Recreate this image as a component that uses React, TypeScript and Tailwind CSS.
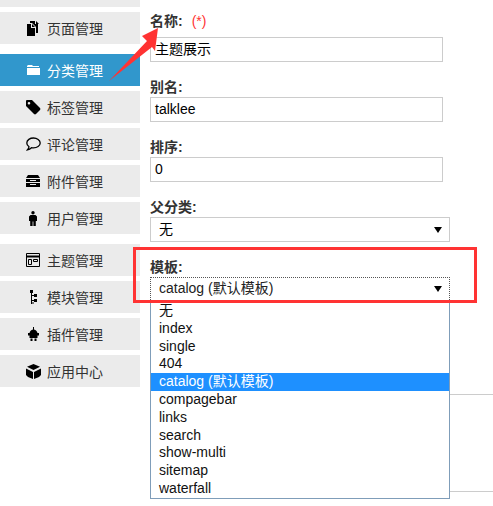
const sans = 'font-["Liberation_Sans","Noto_Sans_CJK_SC",sans-serif]';

function PageIcon() {
  return (
    <svg viewBox="0 0 14 15" className="h-[15px] w-[14px] shrink-0" fill="currentColor">
      <path d="M1 3h4v4h4v8H1z" />
      <path d="M4 0h5v3h3v9h-2V6L6 2H4z" />
      <path d="M10 0l3 3h-3z" />
      <path d="M6 3l3 3H6z" />
    </svg>
  );
}

function FolderIcon() {
  return (
    <svg viewBox="0 0 13 10" className="h-[10px] w-[13px] shrink-0" fill="currentColor">
      <path d="M1 0h4l1 1h6v1H0V1z" />
      <path d="M0 3h13v7H0z" />
    </svg>
  );
}

function TagIcon() {
  return (
    <svg viewBox="0 0 15 15" className="h-[15px] w-[15px] shrink-0" fill="currentColor">
      <path
        fillRule="evenodd"
        d="M1 0h5l8 8a1.5 1.5 0 0 1 0 2l-4 4a1.5 1.5 0 0 1-2 0L0 6V1a1 1 0 0 1 1-1zm2 2a1.3 1.3 0 1 0 0 2.600A1.300 1.300 0 0 0 3 2z"
      />
    </svg>
  );
}

function CommentIcon() {
  return (
    <svg viewBox="0 0 15 14" className="h-[14px] w-[15px] shrink-0" fill="none" stroke="currentColor" strokeWidth="1.3">
      <path d="M7.500 1C4 1 .8 3 .8 6c0 1.800 1 3 2.200 3.800-.1 1.200-.7 2.200-1.500 3 1.700-.2 3-1 4-2.100.6.100 1.200.2 2 .2 3.500 0 6.700-2 6.700-4.900S11 1 7.500 1z" />
    </svg>
  );
}

function ArchiveIcon() {
  return (
    <svg viewBox="0 0 14 12" className="h-[12px] w-[14px] shrink-0" fill="currentColor">
      <path d="M2 0h10l2 3H0z" />
      <path fillRule="evenodd" d="M0 4h14v3H0zm4 1v1h6V5zM0 8h14v4H0zm4 1v1h6V9z" />
    </svg>
  );
}

function UserIcon() {
  return (
    <svg viewBox="0 0 8 15" className="h-[15px] w-[8px] shrink-0" fill="currentColor">
      <circle cx="4" cy="1.700" r="1.700" />
      <path d="M1.500 4h5L8 5.500V10H6.800v5H4.400v-4.500h-.8V15H1.200v-5H0V5.500z" />
    </svg>
  );
}

function LayoutIcon() {
  return (
    <svg viewBox="0 0 14 14" className="h-[14px] w-[14px] shrink-0" fill="none" stroke="currentColor">
      <path d="M.5.500h13v13H.5z" />
      <path d="M.5 3.500h13" strokeWidth="2" />
      <path d="M2.500 6.500h3v5h-3zM7.500 6.500h4v2h-4z" />
    </svg>
  );
}

function TreeIcon() {
  return (
    <svg viewBox="0 0 7 14" className="h-[14px] w-[7px] shrink-0" fill="currentColor">
      <path d="M0 0h3v3H0z" />
      <path d="M1 3h1v11H1z" />
      <path d="M2 5h2v1H2zM2 10h2v1H2zM2 12.500h2v1H2z" />
      <path d="M4 4h3v3H4zM4 9h3v3H4z" />
    </svg>
  );
}

function PlugIcon() {
  return (
    <svg viewBox="0 0 11 14" className="h-[14px] w-[11px] shrink-0" fill="currentColor">
      <path d="M5 0h1v2.500c2 .5 3 1.500 3.500 3.500H11v2.500H9.500V11h-8V8.500H0V6h1.500C2 4 3 3 5 2.500z" />
      <path d="M2.500 11.500h2V14h-2zM6.500 11.500h2V14h-2z" />
    </svg>
  );
}

function CubeIcon() {
  return (
    <svg viewBox="0 0 15 15" className="h-[15px] w-[15px] shrink-0" fill="currentColor">
      <path d="M7.500 0L14 2.800 7.500 6 1 2.800z" />
      <path d="M0 4.500l7 3.500v7l-5-2-2-2zM15 4.500L8 8v7l5-2 2-2z" />
    </svg>
  );
}

const menu = [
  { label: '页面管理', icon: <PageIcon />, top: 'mt-[5px]' },
  { label: '分类管理', icon: <FolderIcon />, active: true, top: 'mt-[10px]' },
  { label: '标签管理', icon: <TagIcon />, top: 'mt-[5px]' },
  { label: '评论管理', icon: <CommentIcon />, top: 'mt-[5px]' },
  { label: '附件管理', icon: <ArchiveIcon />, top: 'mt-[5px]' },
  { label: '用户管理', icon: <UserIcon />, top: 'mt-[5px]' },
  { label: '主题管理', icon: <LayoutIcon />, top: 'mt-[10px]' },
  { label: '模块管理', icon: <TreeIcon />, top: 'mt-[5px]' },
  { label: '插件管理', icon: <PlugIcon />, top: 'mt-[5px]' },
  { label: '应用中心', icon: <CubeIcon />, top: 'mt-[5px]' },
];

const options = ['无', 'index', 'single', '404', 'catalog (默认模板)', 'compagebar', 'links', 'search', 'show-multi', 'sitemap', 'waterfall'];

function TextField({ label, value }: { label: string; value: string }) {
  return (
    <div className="mt-[15px]">
      <label className="block h-[19px] text-[14px] leading-[21px] font-bold text-[#333]">{label}</label>
      <div className="mt-[1px] flex h-[25px] w-[293px] items-center border border-[#ccc] bg-white px-[4px] text-[14px] text-black">
        {value}
      </div>
    </div>
  );
}

export default function App() {
  return (
    <div className={`relative flex h-[506px] w-[493px] overflow-hidden bg-white ${sans}`}>
      <nav className="w-[140px] shrink-0">
        <div className="h-[7px] bg-[#ebebeb]" />
        {menu.map((item) => (
          <div
            key={item.label}
            className={`flex h-[32px] items-center text-[14px] ${item.top} ${
              item.active ? 'bg-[#3197cc] text-white' : 'bg-[#ebebeb] text-[#333]'
            }`}
          >
            <span className={`flex w-[47px] shrink-0 justify-center pr-[7px] pl-[26px] ${item.active ? 'text-white' : 'text-black'}`}>
              {item.icon}
            </span>
            <span className="pt-[2px]">{item.label}</span>
          </div>
        ))}
      </nav>

      <main className="ml-[10px] flex-1 pt-[12px]">
        <div className="flex h-[19px] items-center text-[14px] leading-[19px]">
          <span className="font-bold text-[#333]">名称:</span>
          <span className="ml-[9px] text-[#f33]">(*)</span>
        </div>
        <div className="mt-[6px] flex h-[25px] w-[293px] items-center border border-[#ccc] bg-white px-[4px] text-[14px] text-black">
          主题展示
        </div>

        <TextField label="别名:" value="talklee" />
        <TextField label="排序:" value="0" />

        <div className="mt-[15px]">
          <label className="block h-[19px] text-[14px] leading-[21px] font-bold text-[#333]">父分类:</label>
          <div className="mt-[1px] flex h-[25px] w-[300px] items-center justify-between border border-[#ccc] bg-white pr-[7px] pl-[8px] text-[14px] text-black">
            无
            <span className="h-0 w-0 border-x-[4px] border-t-[6px] border-x-transparent border-t-black" />
          </div>
        </div>

        <div className="relative mt-[15px]">
          <label className="block h-[19px] text-[14px] leading-[21px] font-bold text-[#333]">模板:</label>
          <div className="mt-[1px] flex h-[25px] w-[300px] items-center justify-between border border-dotted border-[#555] bg-white pr-[7px] pl-[8px] pb-[2px] text-[14px] text-[#222]">
            catalog (默认模板)
            <span className="h-0 w-0 border-x-[4px] border-t-[6px] border-x-transparent border-t-black" />
          </div>
          <div className="absolute top-[44px] left-0 z-10 w-[300px] border border-t-0 border-[#7f9db9] bg-white pt-[1px] text-[14px] leading-[17.8px] text-[#111]">
            {options.map((option) => (
              <div
                key={option}
                className={`h-[17.8px] pl-[8px] ${option.startsWith('catalog') ? 'bg-[#1e90ff] text-white' : ''}`}
              >
                {option}
              </div>
            ))}
          </div>
        </div>

        <div className="mt-[92px] h-[98px] border-y border-[#ccc]" />
      </main>

      {/* callouts drawn on top of the screenshot */}
      <div className="absolute top-[247px] left-[133px] z-20 h-[56px] w-[344px] border-[3px] border-[#f33]" />
      <svg className="absolute top-0 left-0 z-20" width="493" height="506" fill="#f33">
        <path d="M158 28L142 36 147 41 109 81 152 47 155 51z" />
      </svg>
    </div>
  );
}
